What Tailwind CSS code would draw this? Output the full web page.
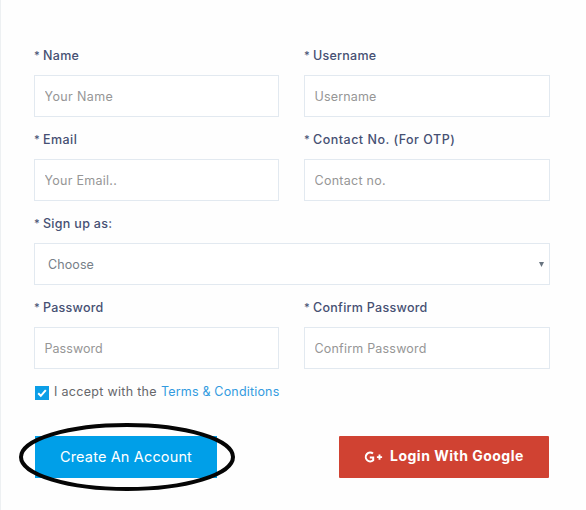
<!DOCTYPE html>
<html lang="en">
<head>
<meta charset="utf-8">
<title>Create account</title>
<script src="https://cdn.jsdelivr.net/npm/@tailwindcss/browser@4"></script>
</head>
<body class="bg-[#fefefe]">
<form class="h-[510px] w-[586px] overflow-hidden border-l border-[#edf0f2] pl-[33px] pr-9 pt-[47px] font-['Inter',sans-serif] text-[12.5px] leading-[18px] text-[#465073]">
  <div class="grid grid-cols-[245px_246px] gap-x-[25px]">
    <label class="block h-[84px] font-medium tracking-[0.3px]"><span class="mr-[5px] inline-block w-1 -translate-y-px text-[11px] tracking-normal">*</span>Name
      <input placeholder="Your Name" class="mt-[10px] block h-[42px] w-full border border-[#e2e9f0] bg-white px-[9.5px] font-normal tracking-[0.38px] placeholder:text-[#969696]"></label>
    <label class="block h-[84px] font-medium tracking-[0.25px]"><span class="mr-[5px] inline-block w-1 -translate-y-px text-[11px] tracking-normal">*</span>Username
      <input placeholder="Username" class="mt-[10px] block h-[42px] w-full border border-[#e2e9f0] bg-white px-[9.5px] font-normal tracking-[0.15px] placeholder:text-[#969696]"></label>
    <label class="block h-[84px] font-medium tracking-[0.45px]"><span class="mr-[5px] inline-block w-1 -translate-y-px text-[11px] tracking-normal">*</span>Email
      <input placeholder="Your Email.." class="mt-[10px] block h-[42px] w-full border border-[#e2e9f0] bg-white px-[9.5px] font-normal tracking-[0.27px] placeholder:text-[#969696]"></label>
    <label class="block h-[84px] font-medium tracking-[0.5px]"><span class="mr-[5px] inline-block w-1 -translate-y-px text-[11px] tracking-normal">*</span>Contact No. (For OTP)
      <input placeholder="Contact no." class="mt-[10px] block h-[42px] w-full border border-[#e2e9f0] bg-white px-[9.5px] font-normal tracking-[0.27px] placeholder:text-[#969696]"></label>
    <div class="col-span-2 h-[84px] font-medium tracking-[0.3px]"><span class="mr-[5px] inline-block w-1 -translate-y-px text-[11px] tracking-normal">*</span>Sign up as:
      <div class="mt-[10px] flex h-[42px] items-center justify-between border border-[#e2e9f0] bg-white pl-[13px] pr-[5px] font-normal tracking-[0.1px] text-[#778089]"><span class="pt-px">Choose</span><svg class="h-[5px] w-[5px]" viewBox="0 0 5 5"><path d="M0 0H5L2.5 5Z" fill="#687480"/></svg></div></div>
    <label class="block h-[84px] font-medium tracking-[0.25px]"><span class="mr-[5px] inline-block w-1 -translate-y-px text-[11px] tracking-normal">*</span>Password
      <input placeholder="Password" class="mt-[10px] block h-[42px] w-full border border-[#e2e9f0] bg-white px-[9.5px] font-normal tracking-[0.05px] placeholder:text-[#969696]"></label>
    <label class="block h-[84px] font-medium tracking-[0.28px]"><span class="mr-[5px] inline-block w-1 -translate-y-px text-[11px] tracking-normal">*</span>Confirm Password
      <input placeholder="Confirm Password" class="mt-[10px] block h-[42px] w-full border border-[#e2e9f0] bg-white px-[9.5px] font-normal tracking-[0.2px] placeholder:text-[#969696]"></label>
  </div>
  <div class="flex h-[18px] pl-px text-[#66676b]">
    <svg class="mr-[5px] mt-[3px] h-[14px] w-[14px]" viewBox="0 0 14 14"><path fill="#0b9ee7" d="M0 0h14v14H0z"/><path d="M3.2 7.2 5.8 9.8 10.8 4.1" fill="none" stroke="#fff" stroke-width="2"/></svg>
    <span class="w-[107px] tracking-[0.3px]">I accept with the</span><a class="tracking-[0.18px] text-[#339be0]">Terms &amp; Conditions</a>
  </div>
  <div class="mt-[35px] flex justify-between pr-px">
    <div class="relative ml-px h-[42px] w-[182px]">
      <button type="button" class="h-full w-full bg-[#009fe8] text-[14.5px] tracking-[0.15px] text-white">Create An Account</button>
      <svg class="pointer-events-none absolute -left-4 -top-[13px] h-[68px] w-[216px]" viewBox="0 0 216 68"><ellipse cx="108" cy="34" rx="106" ry="32" fill="none" stroke="#050505" stroke-width="4"/></svg>
    </div>
    <button type="button" class="flex h-[42px] w-[210px] items-center rounded-[1px] bg-[#d04232] pl-[25px] text-sm font-bold tracking-[0.5px] text-white"><svg class="mr-[7px] h-3 w-[19px]" viewBox="0 0 19 12" fill="none" stroke="#fff"><path d="M9 2.6A4.4 4.4 0 1 0 9.2 9.2V6.6H5.8" stroke-width="2"/><path d="M15.5 3.5v5.2M12.9 6.1h5.2" stroke-width="1.9"/></svg><span class="-translate-y-px">Login With Google</span></button>
  </div>
</form>
</body>
</html>
